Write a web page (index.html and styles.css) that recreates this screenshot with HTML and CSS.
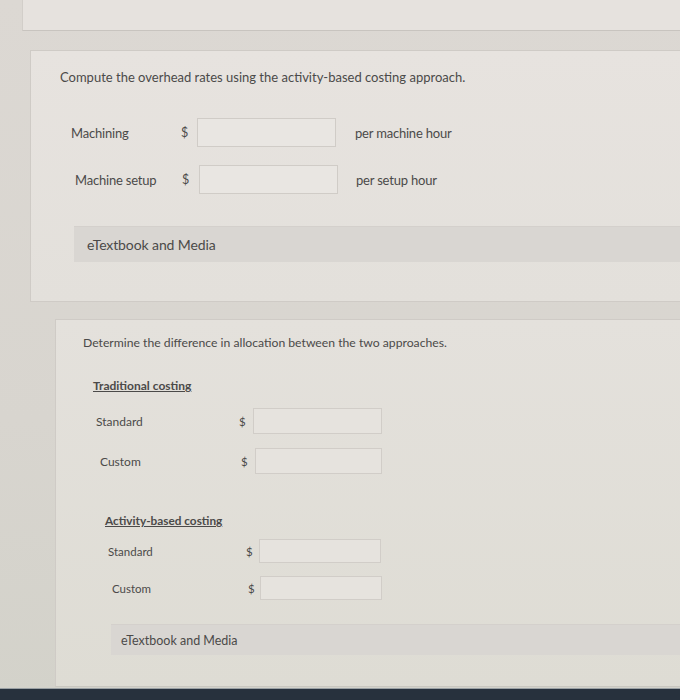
FILE: index.html
```html
<!DOCTYPE html>
<html>
<head>
<meta charset="utf-8">
<link rel="stylesheet" href="styles.css">
</head>
<body>
<div class="page">
  <div class="top-panel"></div>

  <section class="panel panel-a">
    <p class="question q1">Compute the overhead rates using the activity-based costing approach.</p>

    <div class="rate-row ra1">
      <span class="label">Machining</span>
      <span class="dollar">$</span>
      <span class="field"></span>
      <span class="unit">per machine hour</span>
    </div>
    <div class="rate-row ra2">
      <span class="label">Machine setup</span>
      <span class="dollar">$</span>
      <span class="field"></span>
      <span class="unit">per setup hour</span>
    </div>

    <div class="media media-a">eTextbook and Media</div>
  </section>

  <section class="panel panel-b">
    <p class="question q2">Determine the difference in allocation between the two approaches.</p>

    <div class="heading h1">Traditional costing</div>
    <div class="alloc-row rb1">
      <span class="label">Standard</span>
      <span class="dollar">$</span>
      <span class="field"></span>
    </div>
    <div class="alloc-row rb2">
      <span class="label">Custom</span>
      <span class="dollar">$</span>
      <span class="field"></span>
    </div>

    <div class="heading h2">Activity-based costing</div>
    <div class="alloc-row small rb3">
      <span class="label">Standard</span>
      <span class="dollar">$</span>
      <span class="field"></span>
    </div>
    <div class="alloc-row small rb4">
      <span class="label">Custom</span>
      <span class="dollar">$</span>
      <span class="field"></span>
    </div>

    <div class="media media-b">eTextbook and Media</div>
  </section>

  <div class="dock"></div>
</div>
</body>
</html>
```

FILE: styles.css
```css
html, body {
  margin: 0;
  padding: 0;
}
body {
  width: 680px;
  height: 700px;
  overflow: hidden;
  font-family: Lato, "Open Sans", sans-serif;
  color: #4b4a49;
  background: linear-gradient(180deg, #dcd8d3 0%, #d8d5cf 60%, #d3d2ca 100%);
}
.page {
  display: flex;
  flex-direction: column;
  height: 700px;
}
.top-panel {
  margin-left: 22px;
  height: 30px;
  background: #e6e2de;
  border-bottom: 1px solid #c8c4bf;
  border-left: 1px solid #d2cec9;
}
.panel {
  background: linear-gradient(180deg, #e7e3df, #e3e0db);
  border: 1px solid #cfcbc6;
  border-right: none;
}
.panel-a {
  margin-top: 19px;
  margin-left: 30px;
  padding-left: 29px;
  padding-top: 17px;
  box-sizing: border-box;
  height: 252px;
}
.question {
  margin: 0;
}
.q1 {
  font-size: 13px;
  line-height: 18px;
}
.rate-row {
  display: flex;
  align-items: center;
  font-size: 13px;
  letter-spacing: -0.2px;
}
.rate-row .field {
  width: 137px;
  height: 27px;
  border: 1px solid #d0ccc7;
  background: #e9e6e2;
}
.rate-row .dollar {
  width: 16px;
  font-size: 12.5px;
}
.ra1 {
  margin-top: 32px;
  padding-left: 11px;
}
.ra1 .label { width: 110px; }
.ra1 .unit { margin-left: 19px; }
.ra2 {
  margin-top: 18px;
  padding-left: 15px;
}
.ra2 .label { width: 107px; }
.ra2 .dollar { width: 17px; }
.ra2 .unit { margin-left: 18px; }
.media {
  background: #d9d6d2;
  border-top: 1px solid #d4d0cc;
  display: flex;
  align-items: center;
}
.media-a {
  margin-top: 32px;
  margin-left: 14px;
  height: 35px;
  padding-left: 13px;
  font-size: 14px;
  letter-spacing: -0.1px;
}
.panel-b {
  margin-top: 17px;
  margin-left: 55px;
  flex: 1;
  padding-left: 27px;
  padding-top: 15px;
  border-bottom: 1px solid #c9c7c0;
  margin-bottom: 1px;
  background: linear-gradient(180deg, #e4e1dc, #dedcd4);
}
.q2 {
  font-size: 12.2px;
  line-height: 16px;
}
.heading {
  font-size: 12px;
  font-weight: 700;
  text-decoration: underline;
  line-height: 15px;
}
.h1 {
  margin-top: 27px;
  padding-left: 10px;
}
.h2 {
  margin-top: 39px;
  padding-left: 22px;
  font-size: 11.8px;
}
.alloc-row {
  display: flex;
  align-items: center;
  font-size: 12px;
}
.alloc-row .dollar {
  font-size: 11.5px;
  width: 14px;
}
.alloc-row .field {
  width: 127px;
  height: 24px;
  border: 1px solid #d1cdc8;
  background: #e6e3de;
}
.rb1 {
  margin-top: 15px;
  padding-left: 13px;
}
.rb1 .label { width: 143px; }
.rb2 {
  margin-top: 14px;
  padding-left: 17px;
}
.rb2 .label { width: 141px; }
.rb2 .field { width: 125px; }
.small { font-size: 11.5px; }
.small .field {
  width: 120px;
  height: 22px;
}
.rb3 {
  margin-top: 11px;
  padding-left: 25px;
}
.rb3 .label { width: 138px; }
.rb3 .dollar { width: 13px; }
.rb4 {
  margin-top: 13px;
  padding-left: 29px;
}
.rb4 .label { width: 136px; }
.rb4 .dollar { width: 12px; }
.media-b {
  margin-top: 24px;
  margin-left: 28px;
  height: 30px;
  padding-left: 10px;
  font-size: 12.5px;
}
.dock {
  height: 11px;
  background: #27313d;
  border-top: 1px solid #9aa0a4;
}
```
